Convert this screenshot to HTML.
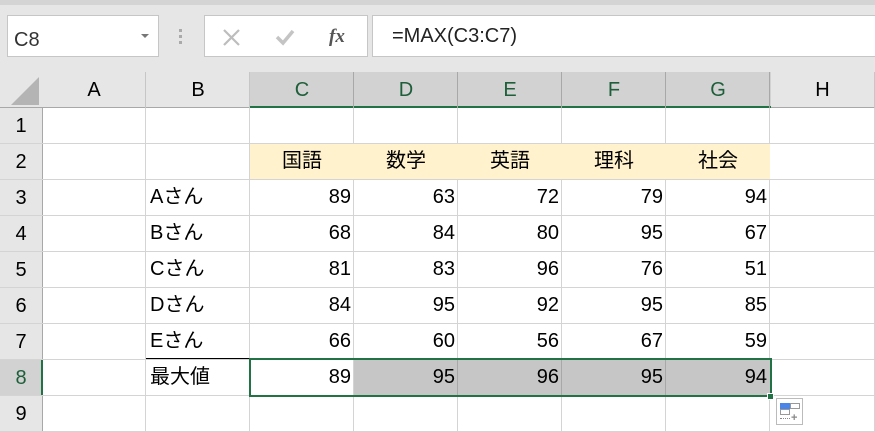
<!DOCTYPE html><html><head><style>
body{margin:0;width:875px;height:432px;overflow:hidden;background:#fff;font-family:"Liberation Sans","Noto Sans CJK JP",sans-serif;position:relative}
div{position:absolute;box-sizing:border-box}
.c{font-size:20px;line-height:37px;color:#000;white-space:nowrap}
.r{text-align:right;padding-right:3px}
.hd{font-size:20px;text-align:center;color:#000;line-height:36px}
</style></head><body>
<div style="left:0;top:0;width:875px;height:72px;background:#e6e6e6"></div>
<div style="left:0;top:0;width:875px;height:5px;background:#d4d4d4"></div>
<div style="left:7px;top:15px;width:152px;height:42px;background:#fff;border:1px solid #c6c6c6"></div>
<div class="c" style="left:14px;top:22px;font-size:20px;color:#333;line-height:36px">C8</div>
<div style="left:141px;top:34px;width:0;height:0;border-left:4px solid transparent;border-right:4px solid transparent;border-top:4px solid #777"></div>
<div style="left:179px;top:29px;width:3px;height:3px;background:#aaa;box-shadow:0 6px 0 #aaa,0 12px 0 #aaa"></div>
<div style="left:204px;top:15px;width:164px;height:42px;background:#fff;border:1px solid #c6c6c6"></div>
<svg style="position:absolute;left:221px;top:27px" width="100" height="20"><path d="M3 3L18 18M18 3L3 18" stroke="#bdbdbd" stroke-width="2.2"/><path d="M56 10L62 16L72 4" stroke="#c4c4c4" stroke-width="3.5" fill="none"/></svg>
<div style="left:329px;top:22px;font-family:'Liberation Serif',serif;font-style:italic;font-weight:bold;font-size:19px;color:#555;line-height:30px">fx</div>
<div style="left:372px;top:15px;width:510px;height:42px;background:#fff;border:1px solid #c6c6c6"></div>
<div class="c" style="left:392px;top:18px;font-size:20px;color:#222">=MAX(C3:C7)</div>
<div style="left:0;top:72px;width:875px;height:36px;background:#e6e6e6;border-bottom:1px solid #a8a8a8"></div>
<div style="left:250px;top:72px;width:521px;height:36px;background:#d2d2d2;border-bottom:2px solid #217346"></div>
<svg style="position:absolute;left:10px;top:76px" width="30" height="30"><path d="M29 1L29 29L1 29Z" fill="#b4b4b4"/></svg>
<div style="left:0;top:108px;width:43px;height:324px;background:#e6e6e6;border-right:1px solid #a8a8a8"></div>
<div style="left:0;top:359px;width:43px;height:37px;background:#d2d2d2;border-right:2px solid #217346"></div>
<div id="g"></div>
<script>
var xs=[42,146,250,354,458,562,666,770,875],L="ABCDEFGH",h="";
for(var i=0;i<8;i++){var sel=i>=2&&i<=6;h+='<div class="hd" style="left:'+xs[i]+'px;top:72px;width:'+(xs[i+1]-xs[i])+'px;height:36px;color:'+(sel?'#1e5e3a':'#000')+'">'+L[i]+'</div>';
h+='<div style="left:'+(xs[i+1]-1)+'px;top:72px;width:1px;height:36px;background:'+(sel?'#a8a8a8':'#c6c6c6')+'"></div>';
h+='<div style="left:'+(xs[i+1]-1)+'px;top:108px;width:1px;height:324px;background:#d4d4d4"></div>';}
var ys=[107,143,179,215,251,287,323,359,395,431];
for(var r=0;r<9;r++){h+='<div style="left:0;top:'+(ys[r+1])+'px;width:875px;height:1px;background:#d4d4d4"></div>';
h+='<div class="hd" style="left:0;top:'+(ys[r]+1)+'px;width:42px;color:'+(r==7?'#1e5e3a':'#000')+'">'+(r+1)+'</div>';}
h+='<div style="left:250px;top:144px;width:520px;height:35px;background:#fff2cc"></div>';
h+='<div style="left:354px;top:360px;width:416px;height:35px;background:#c6c6c6"></div>';
for(var i=4;i<7;i++)h+='<div style="left:'+(xs[i]-1)+'px;top:360px;width:1px;height:35px;background:#a8a8a8"></div>';
var subj=["国語","数学","英語","理科","社会"];
for(var i=0;i<5;i++)h+='<div class="c" style="left:'+xs[i+2]+'px;top:143px;width:104px;text-align:center">'+subj[i]+'</div>';
var names=["Aさん","Bさん","Cさん","Dさん","Eさん","最大値"];
var d=[[89,63,72,79,94],[68,84,80,95,67],[81,83,96,76,51],[84,95,92,95,85],[66,60,56,67,59],[89,95,96,95,94]];
for(var r=0;r<6;r++){h+='<div class="c" style="left:150px;top:'+(ys[r+2])+'px">'+names[r]+'</div>';
for(var i=0;i<5;i++)h+='<div class="c r" style="left:'+xs[i+2]+'px;top:'+ys[r+2]+'px;width:104px">'+d[r][i]+'</div>';}
h+='<div style="left:146px;top:358px;width:104px;height:1px;background:#000"></div>';
h+='<div style="left:249px;top:358px;width:523px;height:39px;border:2px solid #217346"></div>';
h+='<div style="left:767px;top:393px;width:7px;height:7px;background:#217346;border:1px solid #fff"></div>';
document.getElementById('g').outerHTML=h;
</script>
<div style="left:776px;top:398px;width:27px;height:27px;background:#fff;border:1px solid #bbb"></div>
<div style="left:780px;top:403px;width:10px;height:6px;background:#4a86e8"></div>
<div style="left:790px;top:403px;width:10px;height:6px;border:1px solid #999"></div>
<div style="left:780px;top:409px;width:10px;height:6px;border:1px solid #999"></div>
<div style="left:780px;top:418px;width:10px;height:1px;border-top:1px dotted #888"></div>
<div style="left:791px;top:413px;font-size:11px;color:#888;font-weight:bold;line-height:10px">+</div>
</body></html>
